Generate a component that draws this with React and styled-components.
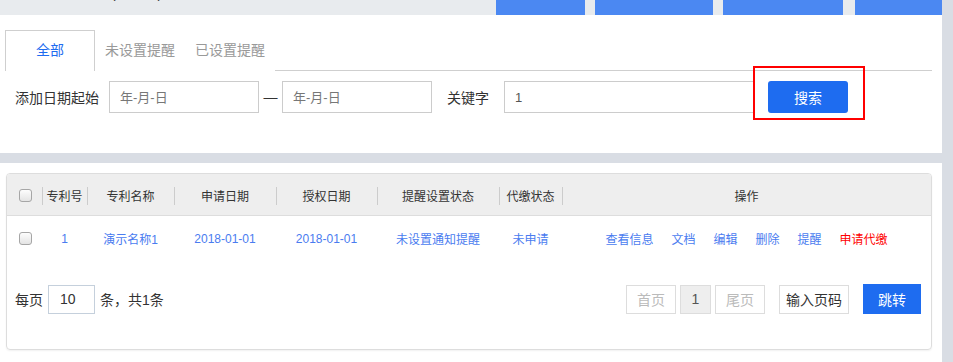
import styled, { createGlobalStyle } from "styled-components";

const GlobalStyle = createGlobalStyle`
  html, body {
    margin: 0;
    padding: 0;
    background: #d9dde4;
    font-family: "Liberation Sans", "Noto Sans CJK SC", sans-serif;
    color: #333;
  }
  * {
    box-sizing: border-box;
  }
`;

const columns = "35px 45px 87px 102px 101px 122px 63px 1fr";

const rows = [
  {
    id: 1,
    name: "演示名称1",
    applyDate: "2018-01-01",
    grantDate: "2018-01-01",
    remindState: "未设置通知提醒",
    payState: "未申请",
  },
];

const actions = [
  { label: "查看信息" },
  { label: "文档" },
  { label: "编辑" },
  { label: "删除" },
  { label: "提醒" },
  { label: "申请代缴", danger: true },
];

function App() {
  return (
    <>
      <GlobalStyle />
      <Main>
        <TopBar>
          <Title>专利年费监控 (待处理)</Title>
          <TopButtons>
            <TopButton $w={89} />
            <TopButton $w={118} />
            <TopButton $w={120} />
            <TopButton $w={87} $last />
          </TopButtons>
        </TopBar>

        <FilterPanel>
          <Tabs>
            <Tab $active>全部</Tab>
            <Tab>未设置提醒</Tab>
            <Tab>已设置提醒</Tab>
          </Tabs>
          <FilterRow>
            <Label>添加日期起始</Label>
            <Input $w={150} placeholder="年-月-日" />
            <Dash>—</Dash>
            <Input $w={150} placeholder="年-月-日" />
            <Label $left={15} $right={15}>关键字</Label>
            <Input $w={250} defaultValue="1" />
            <SearchWrap>
              <SearchButton>搜索</SearchButton>
              <Highlight />
            </SearchWrap>
          </FilterRow>
        </FilterPanel>

        <TablePanel>
          <Card>
            <HeaderRow>
              <HeadCell>
                <CheckBox type="checkbox" />
              </HeadCell>
              <HeadCell $divider>专利号</HeadCell>
              <HeadCell $divider>专利名称</HeadCell>
              <HeadCell $divider>申请日期</HeadCell>
              <HeadCell $divider>授权日期</HeadCell>
              <HeadCell $divider>提醒设置状态</HeadCell>
              <HeadCell $divider>代缴状态</HeadCell>
              <HeadCell $divider>操作</HeadCell>
            </HeaderRow>
            {rows.map((row) => (
              <DataRow key={row.id}>
                <Cell>
                  <CheckBox type="checkbox" />
                </Cell>
                <Cell>{row.id}</Cell>
                <Cell>{row.name}</Cell>
                <Cell>{row.applyDate}</Cell>
                <Cell>{row.grantDate}</Cell>
                <Cell>{row.remindState}</Cell>
                <Cell>{row.payState}</Cell>
                <Cell>
                  <Actions>
                    {actions.map((a) => (
                      <ActionLink key={a.label} $danger={a.danger}>
                        {a.label}
                      </ActionLink>
                    ))}
                  </Actions>
                </Cell>
              </DataRow>
            ))}
            <Footer>
              <PageSize>
                每页
                <SizeInput defaultValue="10" />
                条，共1条
              </PageSize>
              <Pager>
                <PageBox $w={50} $disabled>首页</PageBox>
                <PageBox $w={31} $current>1</PageBox>
                <PageBox $w={50} $disabled>尾页</PageBox>
                <PageBox $w={70} $gapLeft={10}>输入页码</PageBox>
                <JumpButton>跳转</JumpButton>
              </Pager>
            </Footer>
          </Card>
        </TablePanel>
      </Main>
    </>
  );
}

const Main = styled.div`
  width: 942px;
  min-height: 362px;
  display: flex;
  flex-direction: column;
`;

const TopBar = styled.div`
  height: 15px;
  background: #e8ebee;
  display: flex;
  justify-content: space-between;
  overflow: hidden;
`;

const Title = styled.div`
  margin-top: -17px;
  padding-left: 23px;
  font-size: 14px;
  line-height: 20px;
  color: #333;
  white-space: nowrap;
`;

const TopButtons = styled.div`
  display: flex;
  gap: 10px;
`;

const TopButton = styled.div`
  width: ${(p) => p.$w}px;
  height: 15px;
  background: #4b88f2;
  margin-left: ${(p) => (p.$last ? 2 : 0)}px;
`;

const FilterPanel = styled.div`
  background: #fff;
  height: 138px;
  padding: 15px 10px 0 5px;
`;

const Tabs = styled.div`
  display: flex;
  border-bottom: 1px solid #cfcfcf;
  height: 41px;
`;

const Tab = styled.div`
  width: 90px;
  height: 41px;
  display: flex;
  align-items: center;
  justify-content: center;
  font-size: 14px;
  color: ${(p) => (p.$active ? "#1e6cf0" : "#999")};
  background: #fff;
  border: 1px solid ${(p) => (p.$active ? "#cfcfcf" : "transparent")};
  border-bottom: none;
  padding-bottom: 4px;
  cursor: pointer;
`;

const FilterRow = styled.div`
  display: flex;
  align-items: center;
  margin-top: 10px;
  padding-left: 10px;
  height: 32px;
`;

const Label = styled.span`
  font-size: 14px;
  color: #333;
  margin-left: ${(p) => p.$left || 0}px;
  margin-right: ${(p) => p.$right || 10}px;
  white-space: nowrap;
`;

const Input = styled.input`
  width: ${(p) => p.$w}px;
  height: 32px;
  border: 1px solid #ccc;
  padding: 0 10px;
  font-size: 13px;
  color: #555;
  font-family: inherit;
  outline: none;
  &::placeholder {
    color: #777;
  }
`;

const Dash = styled.span`
  width: 23px;
  text-align: center;
  font-size: 14px;
  color: #333;
`;

const SearchWrap = styled.div`
  position: relative;
  margin-left: 14px;
`;

const SearchButton = styled.button`
  width: 80px;
  height: 32px;
  border: none;
  border-radius: 3px;
  background: #1e6cf0;
  color: #fff;
  font-size: 14px;
  font-family: inherit;
  cursor: pointer;
`;

const Highlight = styled.div`
  position: absolute;
  left: -15px;
  top: -15px;
  width: 112px;
  height: 54px;
  border: 2px solid #f00;
  pointer-events: none;
`;

const TablePanel = styled.div`
  margin-top: 10px;
  background: #fff;
  flex: 1;
  padding: 10px 10px 12px 6px;
`;

const Card = styled.div`
  border: 1px solid #ddd;
  border-radius: 4px;
  box-shadow: 0 1px 2px rgba(0, 0, 0, 0.06);
  overflow: hidden;
`;

const HeaderRow = styled.div`
  display: grid;
  grid-template-columns: ${columns};
  height: 42px;
  background: #eee;
  border-bottom: 1px solid #ddd;
`;

const HeadCell = styled.div`
  position: relative;
  display: flex;
  align-items: center;
  justify-content: center;
  font-size: 12px;
  color: #333;
  white-space: nowrap;
  padding-top: 1px;
  &::before {
    content: "";
    display: ${(p) => (p.$divider ? "block" : "none")};
    position: absolute;
    left: 0;
    top: 13px;
    height: 18px;
    border-left: 1px solid #ccc;
  }
`;

const DataRow = styled.div`
  display: grid;
  grid-template-columns: ${columns};
  height: 45px;
`;

const Cell = styled.div`
  display: flex;
  align-items: center;
  justify-content: center;
  font-size: 12px;
  color: #4a7cf0;
  white-space: nowrap;
`;

const CheckBox = styled.input`
  appearance: none;
  width: 13px;
  height: 13px;
  margin: 0 0 0 1px;
  border: 1px solid #a6a6a6;
  border-radius: 3px;
  background: linear-gradient(#fdfdfd, #e4e4e4);
`;

const Actions = styled.div`
  display: flex;
  gap: 18px;
`;

const ActionLink = styled.a`
  color: ${(p) => (p.$danger ? "#f00" : "#4a7cf0")};
  cursor: pointer;
`;

const Footer = styled.div`
  display: flex;
  align-items: center;
  justify-content: space-between;
  padding: 23px 10px 35px 8px;
`;

const PageSize = styled.div`
  display: flex;
  align-items: center;
  gap: 5px;
  font-size: 14px;
  color: #333;
`;

const SizeInput = styled.input`
  width: 47px;
  height: 29px;
  border: 1px solid #c5d0dc;
  padding: 0 11px;
  font-size: 14px;
  color: #333;
  font-family: inherit;
  outline: none;
`;

const Pager = styled.div`
  display: flex;
  align-items: center;
  gap: 4px;
`;

const PageBox = styled.div`
  flex: none;
  width: ${(p) => p.$w}px;
  height: 29px;
  margin-left: ${(p) => p.$gapLeft || 0}px;
  display: flex;
  align-items: center;
  justify-content: center;
  border: 1px solid #ddd;
  font-size: 14px;
  white-space: nowrap;
  background: ${(p) => (p.$current ? "#eee" : "#fff")};
  color: ${(p) => (p.$disabled ? "#bbb" : p.$current ? "#555" : "#333")};
`;

const JumpButton = styled.button`
  flex: none;
  margin-left: 10px;
  width: 58px;
  height: 30px;
  border: none;
  background: #1e6cf0;
  color: #fff;
  font-size: 14px;
  font-family: inherit;
  cursor: pointer;
`;

export default App;
